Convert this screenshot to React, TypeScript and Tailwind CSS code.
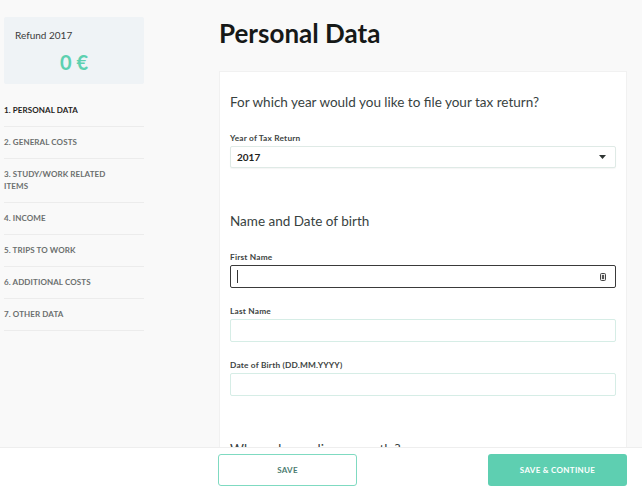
import React from "react";

const navItems = [
  "1. PERSONAL DATA",
  "2. GENERAL COSTS",
  "3. STUDY/WORK RELATED ITEMS",
  "4. INCOME",
  "5. TRIPS TO WORK",
  "6. ADDITIONAL COSTS",
  "7. OTHER DATA",
];

function Label({ children }: { children: React.ReactNode }) {
  return (
    <div className="text-[8.3px] leading-[12px] font-bold text-[#3d4442] tracking-[0.2px] mb-[2px]">
      {children}
    </div>
  );
}

function Input({ focused = false }: { focused?: boolean }) {
  return (
    <div
      className={
        "h-[23px] w-[386px] rounded-[2px] bg-white relative flex items-center " +
        (focused ? "border border-[#3a3a3a]" : "border border-[#d6ede6]")
      }
    >
      {focused && (
        <>
          <div className="ml-[6px] w-px h-[13px] bg-[#333]" />
          <svg
            className="absolute right-[9px] top-[7px]"
            width="6"
            height="8"
            viewBox="0 0 6 8"
          >
            <rect x="0.5" y="0.5" width="5" height="7" rx="1" fill="#e8e8e8" stroke="#444" strokeWidth="1" />
            <rect x="2" y="2" width="2" height="4" fill="#555" />
          </svg>
        </>
      )}
    </div>
  );
}

export default function App() {
  return (
    <div
      className="w-[642px] h-[490px] bg-[#f9f9f9] flex flex-col overflow-hidden"
      style={{ fontFamily: "Lato, 'Open Sans', sans-serif" }}
    >
      <div className="h-[447px] overflow-hidden flex pl-[4px]">
        {/* Sidebar */}
        <div className="w-[140px] shrink-0 pt-[17px]">
          <div className="h-[67px] bg-[#eff3f6] rounded-[2px] pt-[11px]">
            <div className="pl-[11px] text-[10px] leading-[14px] text-[#3b3b3b]">Refund 2017</div>
            <div className="text-center text-[20px] leading-[24px] font-bold text-[#5dd0b0] mt-[8px]">
              0 €
            </div>
          </div>
          <div className="mt-[11px]">
            {navItems.map((item, i) => (
              <div
                key={item}
                className={
                  "border-b border-[#ececec] pt-[9px] pb-[10px] text-[8px] leading-[12px] font-bold tracking-[0.1px] " +
                  (i === 0 ? "text-[#1f2321]" : "text-[#6b6f6e]")
                }
              >
                {i === 2 ? (
                  <>
                    3. STUDY/WORK RELATED
                    <br />
                    ITEMS
                  </>
                ) : (
                  item
                )}
              </div>
            ))}
          </div>
        </div>

        {/* Main */}
        <div className="ml-[75px] w-[408px] shrink-0 pt-[18px]">
          <h1 className="text-[26px] leading-[30px] font-bold text-[#161918]">Personal Data</h1>
          <div className="mt-[23px] bg-white border border-[#f1f1f1] pl-[10px] pt-[20px] pb-[40px]">
            <div className="text-[13.5px] leading-[20px] text-[#38423f]">
              For which year would you like to file your tax return?
            </div>
            <div className="mt-[20px]">
              <Label>Year of Tax Return</Label>
              <div className="h-[22px] w-[386px] mt-[1px] rounded-[2px] border border-[#dfeae6] bg-white flex items-center justify-between pl-[6px] pr-[9px] shadow-[0_1px_1px_rgba(0,0,0,0.04)]">
                <span className="text-[10px] font-bold text-[#1f2321]">2017</span>
                <svg width="7" height="4" viewBox="0 0 7 4">
                  <path d="M0 0 L7 0 L3.5 4 Z" fill="#2e3432" />
                </svg>
              </div>
            </div>

            <div className="mt-[43px] text-[13.5px] leading-[20px] text-[#38423f]">
              Name and Date of birth
            </div>
            <div className="mt-[20px]">
              <Label>First Name</Label>
              <Input focused />
            </div>
            <div className="mt-[17px]">
              <Label>Last Name</Label>
              <Input />
            </div>
            <div className="mt-[17px]">
              <Label>Date of Birth (DD.MM.YYYY)</Label>
              <Input />
            </div>

            <div className="mt-[43px] text-[13.5px] leading-[20px] text-[#38423f]">
              Where do you live currently?
            </div>
          </div>
        </div>
      </div>

      {/* Bottom bar */}
      <div className="h-[43px] bg-white border-t border-[#eeeeee] pt-[6px]">
        <div className="ml-[218px] w-[409px] flex justify-between">
          <button className="w-[139px] h-[32px] rounded-[3px] border border-[#7fdac1] bg-white text-[8px] font-bold text-[#4b7b6f] tracking-[0.3px]">
            SAVE
          </button>
          <button className="w-[139px] h-[32px] rounded-[3px] bg-[#5ecfb1] text-[8px] font-bold text-white tracking-[0.3px]">
            SAVE &amp; CONTINUE
          </button>
        </div>
      </div>
    </div>
  );
}
